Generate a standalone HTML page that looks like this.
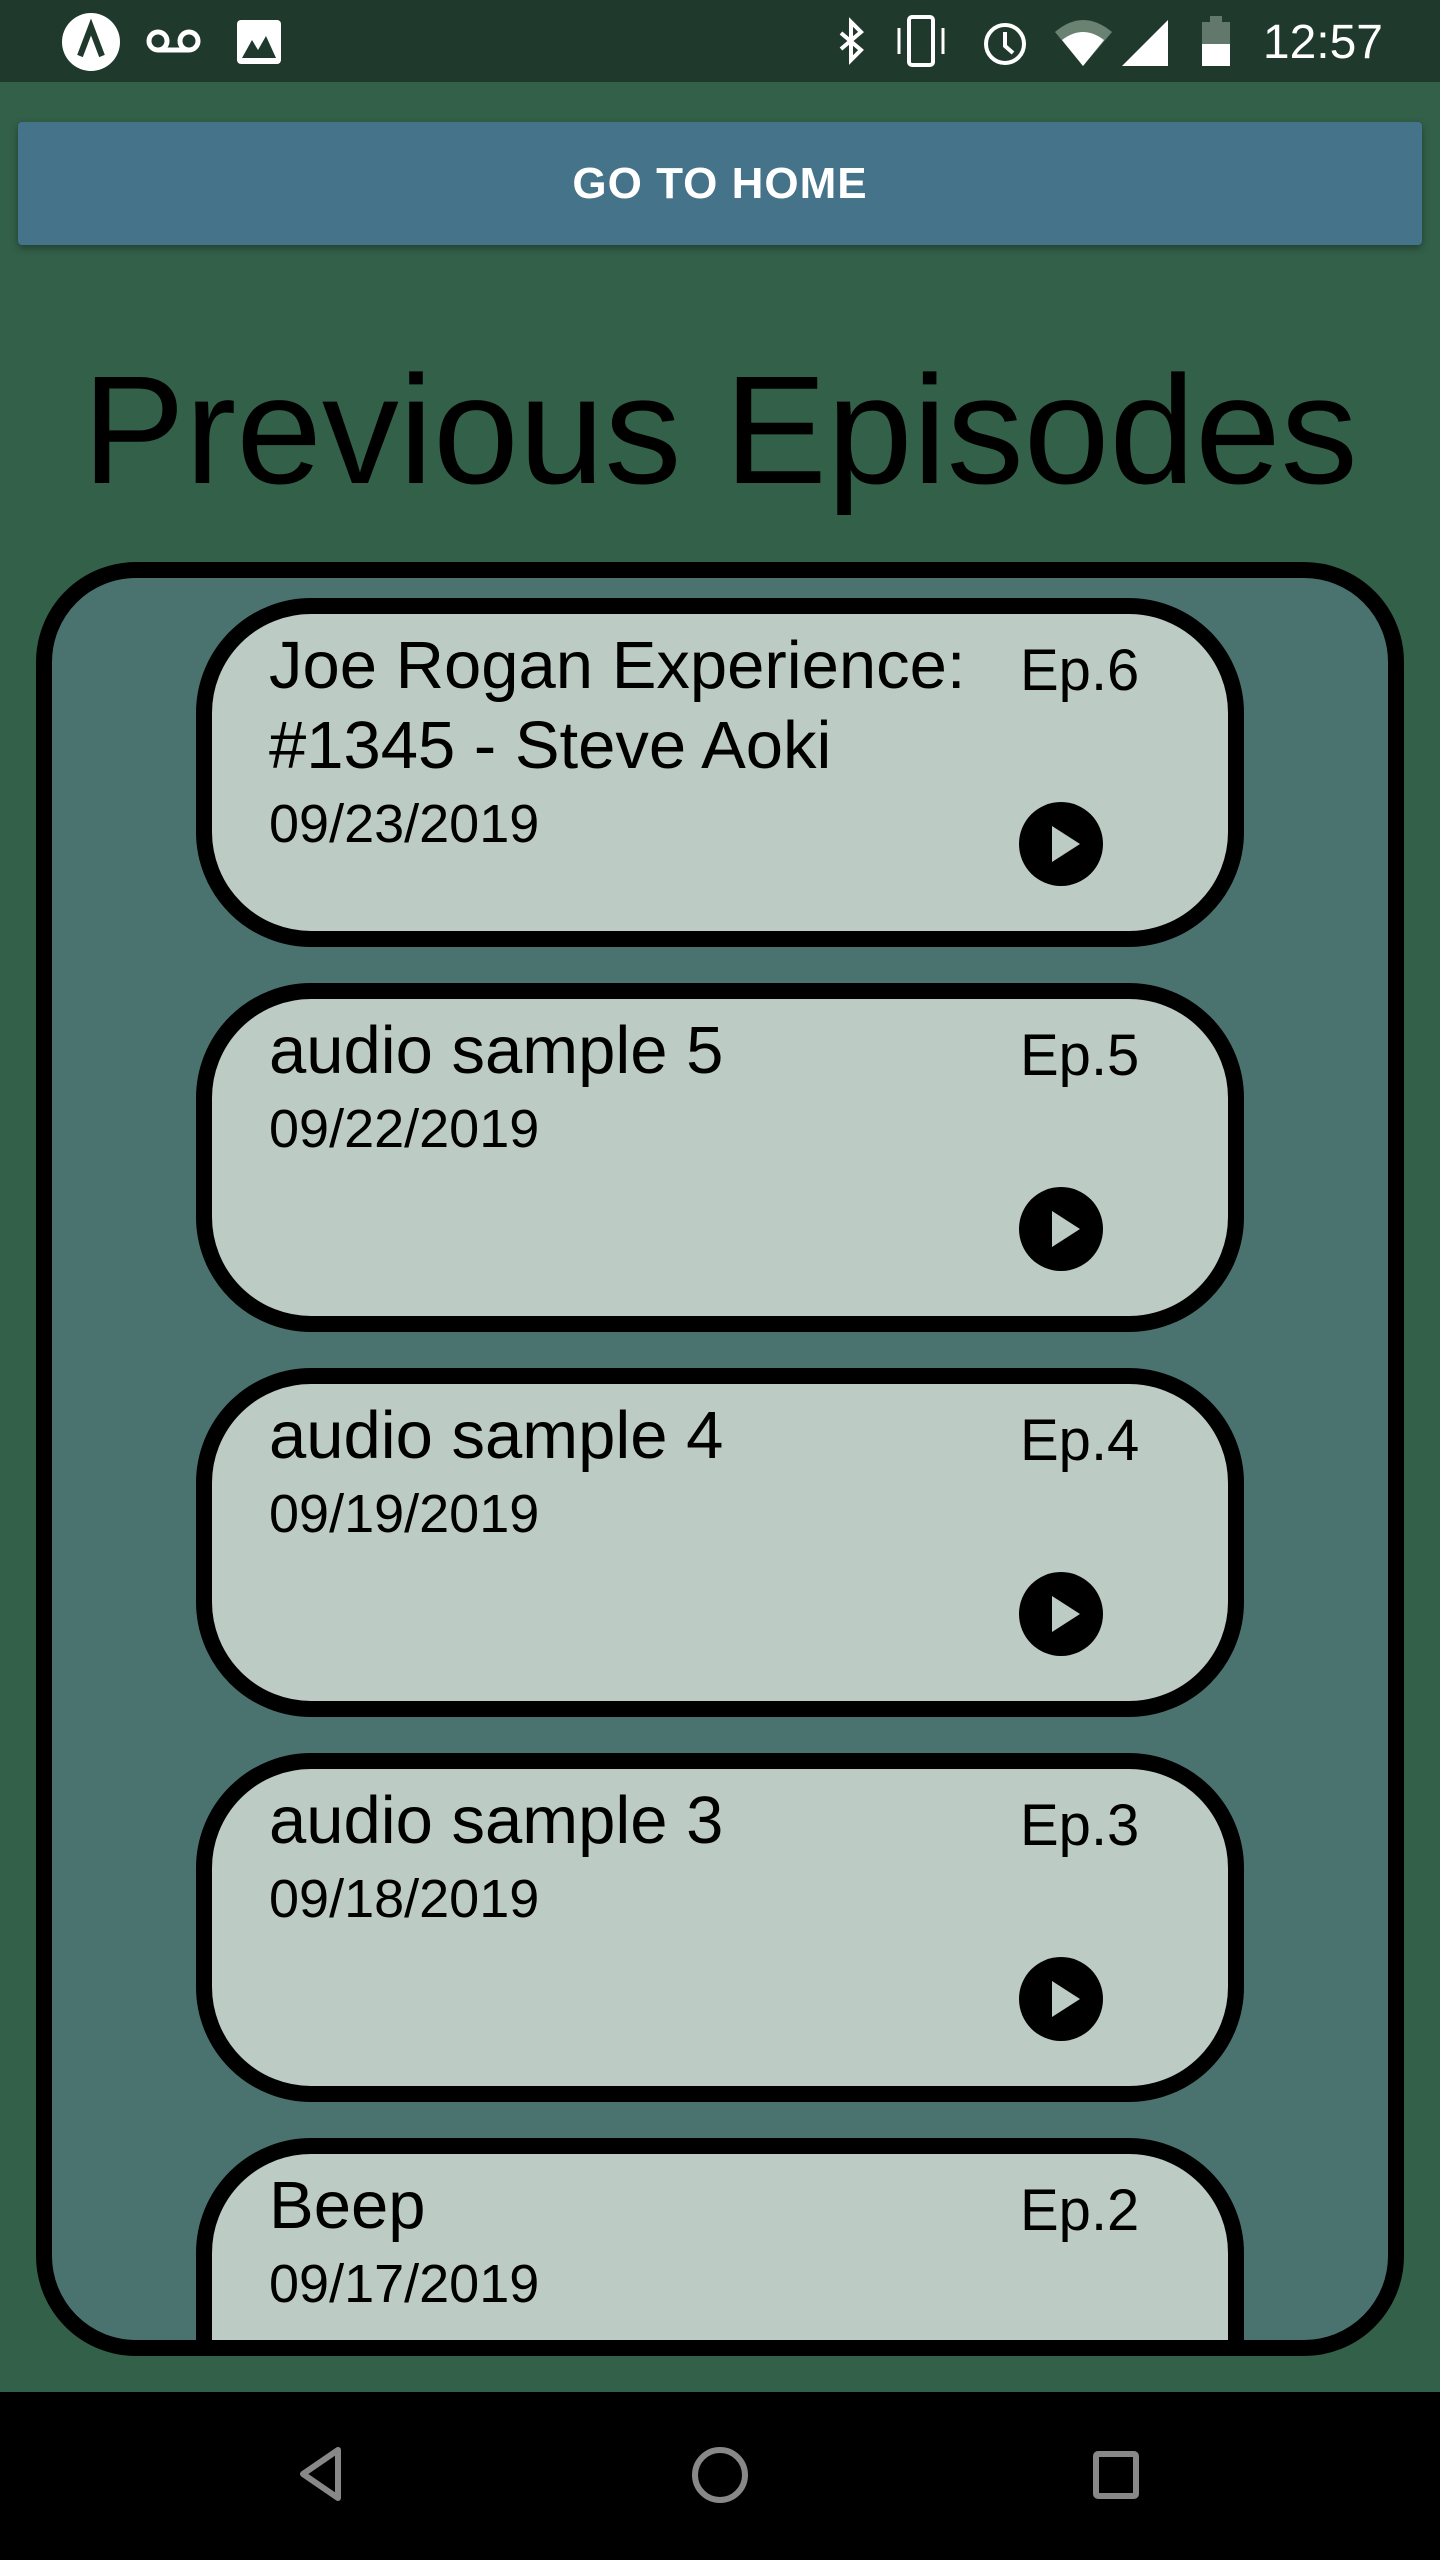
<!DOCTYPE html>
<html><head><meta charset="utf-8"><style>
*{margin:0;padding:0;box-sizing:border-box}
body{width:1440px;height:2560px;background:#336049;font-family:"Liberation Sans",sans-serif;position:relative;overflow:hidden}
.sb{position:absolute;left:0;top:0;width:1440px;height:82px;background:#1f3a2d}
.btn{position:absolute;left:18px;top:122px;width:1404px;height:123px;background:#44738a;border-radius:4px;box-shadow:0 3px 8px rgba(0,0,0,.35);color:#fff;font-weight:bold;font-size:44px;text-align:center;line-height:123px;letter-spacing:1px}
h1{position:absolute;left:0;width:1440px;top:340px;text-align:center;font-weight:normal;font-size:154px;line-height:180px;color:#000}
.outer{position:absolute;left:36px;top:562px;width:1368px;height:1794px;border:16px solid #000;border-radius:100px;background:#4a7370;overflow:hidden}
.card{position:absolute;left:144px;width:1048px;height:349px;border:16px solid #000;border-radius:115px;background:#bccbc4}
.t{position:absolute;left:57px;font-size:67px;line-height:80px;color:#000;white-space:nowrap}
.d{position:absolute;left:57px;font-size:54px;line-height:60px;color:#000}
.ep{position:absolute;left:808px;top:22px;font-size:58px;line-height:70px}
.play{position:absolute;left:807px;top:188px;width:84px;height:84px;border-radius:50%;background:#000}
.play:after{content:"";position:absolute;left:33px;top:24px;border-left:28px solid #bccbc4;border-top:18px solid transparent;border-bottom:18px solid transparent}
.nav{position:absolute;left:0;top:2392px;width:1440px;height:168px;background:#000}
</style></head><body>
<div class="sb">
<svg width="1440" height="82" style="position:absolute;left:0;top:0">
<circle cx="91" cy="42" r="29" fill="#fff"/>
<path d="M80 56 L91 27 L102 56" stroke="#1f3a2d" stroke-width="6" fill="none"/>
<circle cx="158" cy="41" r="9" stroke="#fff" stroke-width="5" fill="none"/>
<circle cx="189" cy="41" r="9" stroke="#fff" stroke-width="5" fill="none"/>
<line x1="158" y1="50" x2="189" y2="50" stroke="#fff" stroke-width="5"/>
<rect x="237" y="20" width="44" height="44" rx="4" fill="#fff"/>
<path d="M242 58 L252 40 L258 50 L266 36 L276 58Z" fill="#1f3a2d"/>
<path d="M841 33 L861 50 L851 60 L851 22 L861 32 L841 49" stroke="#fff" stroke-width="4" fill="none"/>
<rect x="909" y="17" width="24" height="48" rx="3" stroke="#fff" stroke-width="4" fill="none"/>
<line x1="899" y1="28" x2="899" y2="54" stroke="#fff" stroke-width="3"/><line x1="943" y1="28" x2="943" y2="54" stroke="#fff" stroke-width="3"/>
<circle cx="1005" cy="44" r="19" stroke="#fff" stroke-width="4" fill="none"/>
<path d="M1005 32 L1005 46 L1013 53" stroke="#fff" stroke-width="4" fill="none"/>
<path d="M1055 32 Q1083 8 1112 32 L1083 66Z" fill="#6a8272"/>
<path d="M1062 40 Q1083 24 1104 40 L1083 66Z" fill="#fff"/>
<path d="M1168 66 L1168 20 L1122 66Z" fill="#fff"/>
<rect x="1202" y="22" width="28" height="44" fill="#63786c"/><rect x="1210" y="16" width="12" height="8" fill="#63786c"/>
<rect x="1202" y="44" width="28" height="22" fill="#fff"/>
<text x="1383" y="58" text-anchor="end" font-family="Liberation Sans" font-size="48" fill="#fff">12:57</text>
</svg>
</div>
<div class="btn">GO TO HOME</div>
<h1>Previous Episodes</h1>
<div class="outer">
 <div class="card" style="top:20px"><div class="t" style="top:12px">Joe Rogan Experience:<br>#1345 - Steve Aoki</div><div class="d" style="top:180px">09/23/2019</div><div class="ep">Ep.6</div><div class="play"></div></div>
 <div class="card" style="top:405px"><div class="t" style="top:12px">audio sample 5</div><div class="d" style="top:100px">09/22/2019</div><div class="ep">Ep.5</div><div class="play"></div></div>
 <div class="card" style="top:790px"><div class="t" style="top:12px">audio sample 4</div><div class="d" style="top:100px">09/19/2019</div><div class="ep">Ep.4</div><div class="play"></div></div>
 <div class="card" style="top:1175px"><div class="t" style="top:12px">audio sample 3</div><div class="d" style="top:100px">09/18/2019</div><div class="ep">Ep.3</div><div class="play"></div></div>
 <div class="card" style="top:1560px"><div class="t" style="top:12px">Beep</div><div class="d" style="top:100px">09/17/2019</div><div class="ep">Ep.2</div><div class="play"></div></div>
</div>
<div class="nav">
<svg width="1440" height="168" style="position:absolute;left:0;top:0">
<path d="M338 58 L338 106 L303 82Z" stroke="#888" stroke-width="6" fill="none" stroke-linejoin="round"/>
<circle cx="720" cy="83" r="25" stroke="#888" stroke-width="6" fill="none"/>
<rect x="1096" y="62" width="40" height="42" rx="2" stroke="#888" stroke-width="6" fill="none"/>
</svg>
</div>
</body></html>
